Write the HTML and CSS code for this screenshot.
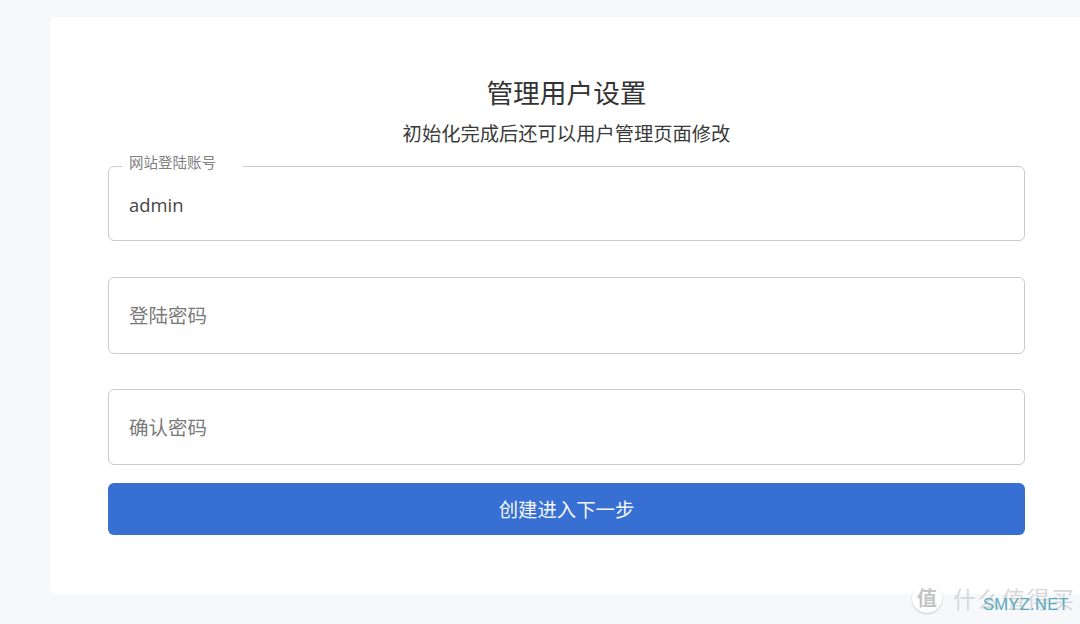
FILE: index.html
```html
<!DOCTYPE html>
<html lang="zh-CN">
<head>
<meta charset="utf-8">
<title>管理用户设置</title>
<link rel="stylesheet" href="styles.css">
</head>
<body>
<main class="card">
  <h1 class="title">管理用户设置</h1>
  <p class="subtitle">初始化完成后还可以用户管理页面修改</p>
  <form class="form">
    <div class="field field-first">
      <span class="legend">网站登陆账号</span>
      <span class="value">admin</span>
    </div>
    <div class="field field-second"><span class="placeholder">登陆密码</span></div>
    <div class="field field-third"><span class="placeholder">确认密码</span></div>
    <button class="submit" type="button">创建进入下一步</button>
  </form>
</main>
<div class="watermark">
  <span class="wm-badge">值</span>
  <span class="wm-text">什么值得买</span>
  <span class="wm-site">SMYZ.NET</span>
</div>
</body>
</html>
```
FILE: styles.css
```css
* { box-sizing: border-box; }
html, body { margin: 0; height: 100%; }
body {
  position: relative;
  width: 1080px;
  height: 624px;
  overflow: hidden;
  background: #f7f8fc;
  padding: 17px 0 0 50px;
  font-family: "Noto Sans CJK SC", "Liberation Sans", sans-serif;
}
.card {
  width: 1030px;
  height: 577px;
  background: #fff;
  border-radius: 6px 0 0 6px;
  padding: 56px 55px 0 58px;
}
.title {
  margin: 0;
  height: 38px;
  font-size: 26.7px;
  line-height: 38px;
  font-weight: 400;
  color: #333;
  text-align: center;
}
.subtitle {
  margin: 7px 0 0;
  height: 30px;
  font-size: 19.3px;
  line-height: 30px;
  color: #3a3a3a;
  text-align: center;
}
.form { margin-top: 18px; display: flex; flex-direction: column; }
.field {
  position: relative;
  display: flex;
  align-items: center;
  border: 1px solid #cbcbcb;
  border-radius: 6px;
  padding: 0 20px;
}
.field-first { height: 75px; }
.field-second { height: 77px; margin-top: 36px; }
.field-third { height: 76px; margin-top: 35px; }
.legend {
  position: absolute;
  left: 13px;
  top: -15px;
  width: 121px;
  height: 24px;
  padding-left: 7px;
  padding-bottom: 4px;
  background: linear-gradient(#fff, #fff) no-repeat 0 12px / 100% 4px;
  font-size: 14.5px;
  line-height: 20px;
  color: #808080;
}
.value {
  font-family: "Open Sans", "Liberation Sans", sans-serif;
  font-size: 18.4px;
  color: #444;
  padding-top: 2px;
}
.placeholder { font-size: 19.5px; color: #7a7a7a; position: relative; top: -1px; }
.submit {
  margin-top: 18px;
  height: 52px;
  border: 0;
  border-radius: 6px;
  background: #376fd3;
  color: #f2f6fd;
  font-family: inherit;
  font-size: 19.4px;
  padding: 0 0 2px;
}
.watermark {
  position: absolute;
  left: 910px;
  top: 581px;
  width: 170px;
  height: 36px;
}
.wm-badge {
  position: absolute;
  left: 2px;
  top: 2px;
  width: 30px;
  height: 30px;
  border-radius: 50%;
  background: #fff;
  box-shadow: 0 1px 2px rgba(0,0,0,.2);
  color: #c4c4c4;
  font-size: 20px;
  line-height: 29px;
  text-align: center;
  font-weight: 700;
}
.wm-text {
  position: absolute;
  left: 43px;
  top: 2px;
  font-size: 23px;
  line-height: 30px;
  letter-spacing: 1.5px;
  color: #d8d8d8;
  white-space: nowrap;
}
.wm-site {
  position: absolute;
  left: 73px;
  top: 13px;
  font-family: "Liberation Sans", sans-serif;
  font-size: 16.5px;
  line-height: 20px;
  letter-spacing: .3px;
  color: #5baabd;
  white-space: nowrap;
}
```
